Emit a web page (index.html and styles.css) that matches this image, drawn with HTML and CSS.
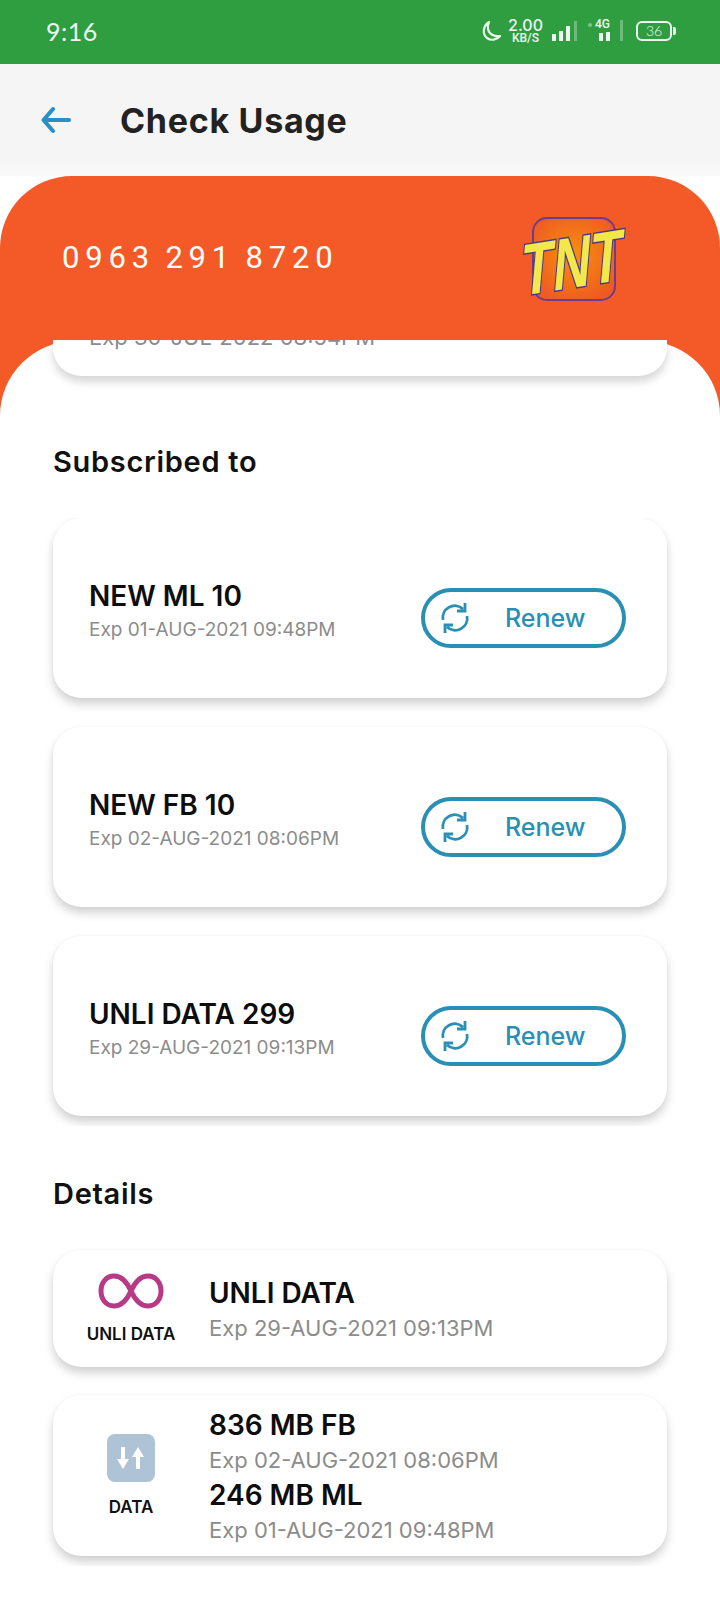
FILE: index.html
```html
<!DOCTYPE html>
<html lang="en">
<head>
  <meta charset="UTF-8" />
  <meta name="viewport" content="width=device-width, initial-scale=1.0"/>
  <title>Check Usage</title>
  <link rel="stylesheet" href="styles.css">
</head>
<body>
  <!-- Status bar -->
  <div class="statusbar">
    <span class="time">9:16</span>
    <div class="status-icons">
      <svg class="moon" width="22" height="24" viewBox="0 0 22 24"><path d="M9 3 C3 7 2 15 7 19 C11 22 17 21 20 17 C14 18 9 15 8 10 C7.600 7.500 8 5 9 3 Z" fill="none" stroke="#e8f5ea" stroke-width="2.200" stroke-linejoin="round"/></svg>
      <div class="speed"><span>2.00</span><span class="unit">KB/S</span></div>
      <svg class="signal" width="26" height="22" viewBox="0 0 26 22">
        <rect x="0" y="14" width="4" height="7" fill="#eef8f0"/>
        <rect x="7" y="11" width="4" height="10" fill="#eef8f0"/>
        <rect x="14" y="6" width="4" height="15" fill="#eef8f0"/>
        <rect x="22" y="1" width="3" height="20" fill="#6dbb7b"/>
      </svg>
      <div class="net">
        <span class="net-label">4G</span>
        <svg width="36" height="24" viewBox="0 0 36 24">
          <circle cx="2" cy="6" r="2" fill="#7fc48b"/>
          <rect x="11" y="14" width="4" height="8" fill="#eef8f0"/>
          <rect x="18" y="13" width="4" height="9" fill="#eef8f0"/>
          <rect x="32" y="1" width="3" height="21" fill="#6dbb7b"/>
        </svg>
      </div>
      <div class="battery"><span class="battery-level">36</span></div>
    </div>
  </div>

  <!-- Header -->
  <div class="header">
    <svg class="back" width="30" height="28" viewBox="0 0 30 28"><path d="M12 3 L2.500 14 L12 25 M3 14 H28" fill="none" stroke="#2a8fc4" stroke-width="4" stroke-linecap="round" stroke-linejoin="round"/></svg>
    <h1>Check Usage</h1>
  </div>

  <!-- Number + logo -->
  <div class="hero">
    <span class="msisdn">0963 291 8720</span>
    <svg class="logo" width="108" height="90" viewBox="0 0 108 90">
      <defs>
        <radialGradient id="logo-glow" cx="50%" cy="45%" r="60%">
          <stop offset="0%" stop-color="#f7900f"/>
          <stop offset="100%" stop-color="#ef5a22"/>
        </radialGradient>
      </defs>
      <rect x="9" y="2" width="82" height="82" rx="14" fill="url(#logo-glow)" stroke="#6b3d8c" stroke-width="2"/>
      <text class="logo-text" x="0" y="0" textLength="102" lengthAdjust="spacingAndGlyphs" transform="translate(-4 80) rotate(-9) skewX(-14) scale(1 2)">TNT</text>
    </svg>
  </div>

  <div class="content">
    <div class="peek-card">
      <span class="exp wide">Exp 30-JUL-2022 08:54PM</span>
    </div>

    <h2 class="section-title first">Subscribed to</h2>

    <div class="subs">
      <div class="sub-card">
        <div class="sub-info">
          <span class="name">NEW ML 10</span>
          <span class="exp">Exp 01-AUG-2021 09:48PM</span>
        </div>
        <a class="renew">
          <svg width="32" height="32" viewBox="0 0 32 32"><path d="M4 18 A12 12 0 0 1 24 7 M28 14 A12 12 0 0 1 8 25 M26 1 V9 H18 M6 31 V23 H14" fill="none" stroke="#2a8fb5" stroke-width="2.800"/></svg>
          <span>Renew</span>
        </a>
      </div>
      <div class="sub-card">
        <div class="sub-info">
          <span class="name">NEW FB 10</span>
          <span class="exp">Exp 02-AUG-2021 08:06PM</span>
        </div>
        <a class="renew">
          <svg width="32" height="32" viewBox="0 0 32 32"><path d="M4 18 A12 12 0 0 1 24 7 M28 14 A12 12 0 0 1 8 25 M26 1 V9 H18 M6 31 V23 H14" fill="none" stroke="#2a8fb5" stroke-width="2.800"/></svg>
          <span>Renew</span>
        </a>
      </div>
      <div class="sub-card">
        <div class="sub-info">
          <span class="name">UNLI DATA 299</span>
          <span class="exp">Exp 29-AUG-2021 09:13PM</span>
        </div>
        <a class="renew">
          <svg width="32" height="32" viewBox="0 0 32 32"><path d="M4 18 A12 12 0 0 1 24 7 M28 14 A12 12 0 0 1 8 25 M26 1 V9 H18 M6 31 V23 H14" fill="none" stroke="#2a8fb5" stroke-width="2.800"/></svg>
          <span>Renew</span>
        </a>
      </div>
    </div>

    <h2 class="section-title">Details</h2>

    <div class="detail-card">
      <div class="detail-icon">
        <svg width="66" height="36" viewBox="0 0 66 36"><path d="M33 18 C28 7 22 3 16 3 C8 3 3 10 3 18 C3 26 8 33 16 33 C22 33 28 29 33 18 C38 7 44 3 50 3 C58 3 63 10 63 18 C63 26 58 33 50 33 C44 33 38 29 33 18 Z" fill="none" stroke="#b83a86" stroke-width="5"/></svg>
        <span>UNLI DATA</span>
      </div>
      <div class="detail-info">
        <span class="name">UNLI DATA</span>
        <span class="exp wide">Exp 29-AUG-2021 09:13PM</span>
      </div>
    </div>

    <div class="detail-card tall">
      <div class="detail-icon">
        <div class="data-badge">
          <svg width="30" height="24" viewBox="0 0 30 24"><path d="M5 1 H9 V13 H13 L7 23 L1 13 H5 Z M20 23 H24 V11 H28 L22 1 L16 11 H20 Z" fill="#fff"/></svg>
        </div>
        <span>DATA</span>
      </div>
      <div class="detail-info">
        <span class="name">836 MB FB</span>
        <span class="exp wide">Exp 02-AUG-2021 08:06PM</span>
        <span class="name">246 MB ML</span>
        <span class="exp wide">Exp 01-AUG-2021 09:48PM</span>
      </div>
    </div>
  </div>
</body>
</html>
```

FILE: styles.css
```css
* {
  margin: 0;
  padding: 0;
  box-sizing: border-box;
  font-family: 'Inter', 'Noto Sans', sans-serif;
}

body {
  width: 720px;
  height: 1600px;
  background-color: #fff;
  overflow: hidden;
}

/* Status bar */
.statusbar {
  height: 64px;
  background-color: #2f9e41;
  color: #eef8f0;
  display: flex;
  justify-content: space-between;
  align-items: center;
  padding: 0 48px 2px 46px;
}

.time {
  font-family: 'Lato', sans-serif;
  font-size: 25px;
  font-weight: 400;
  letter-spacing: 0.5px;
}

.status-icons {
  display: flex;
  align-items: center;
  gap: 10px;
}

.moon {
  margin-right: -2px;
}

.speed {
  display: flex;
  flex-direction: column;
  align-items: center;
  width: 31px;
  font-family: 'Roboto', sans-serif;
  font-size: 16px;
  font-weight: 500;
  line-height: 15px;
}

.speed .unit {
  font-family: 'Roboto', sans-serif;
  font-size: 12px;
  line-height: 11px;
}

.signal {
  margin-left: 1px;
}

.net {
  position: relative;
  width: 36px;
  height: 24px;
}

.net-label {
  position: absolute;
  left: 7px;
  top: -2px;
  font-family: 'Roboto', sans-serif;
  font-size: 12px;
  font-weight: 500;
}

.battery {
  position: relative;
  width: 36px;
  height: 20px;
  margin-left: 2px;
  border: 2px solid #eef8f0;
  border-radius: 6px;
  display: flex;
  justify-content: center;
  align-items: center;
}

.battery::after {
  content: "";
  position: absolute;
  right: -6px;
  top: 4px;
  width: 3px;
  height: 8px;
  background-color: #eef8f0;
  border-radius: 0 2px 2px 0;
}

.battery-level {
  font-family: 'Lato', sans-serif;
  font-size: 14px;
  font-weight: 300;
  line-height: 1;
}

/* Header */
.header {
  height: 112px;
  background: linear-gradient(#f5f5f5 85%, #fafafa);
  display: flex;
  align-items: center;
  padding-left: 41px;
}

.back {
  margin-right: 49px;
}

h1 {
  font-size: 34px;
  font-weight: 700;
  color: #222;
  letter-spacing: 0.7px;
}

/* Orange card */
.hero {
  position: relative;
  height: 244px;
  background-color: #f45a28;
  border-radius: 72px 72px 0 0;
  padding: 62px 88px 0 62px;
  display: flex;
  justify-content: space-between;
  align-items: flex-start;
}

.hero::after {
  content: "";
  position: absolute;
  left: 0;
  right: 0;
  bottom: 0;
  height: 79px;
  background-color: #fff;
  border-radius: 75px 75px 0 0;
}

.msisdn {
  color: #fff;
  font-family: 'Roboto', sans-serif;
  font-size: 31px;
  font-weight: 400;
  letter-spacing: 5.8px;
  word-spacing: -3px;
  margin-top: 1px;
}

.logo {
  margin-top: -22px;
  overflow: visible;
}

.logo-text {
  font-family: 'Liberation Sans', sans-serif;
  font-size: 36px;
  font-weight: 700;
  fill: #f3e84b;
  stroke: #4b3a80;
  stroke-width: 1.500;
  paint-order: stroke;
}

/* Scrolling area */
.content {
  position: relative;
  z-index: 1;
  height: 1226px;
  margin-top: -80px;
  padding: 0 53px;
  overflow: hidden;
}

.peek-card {
  height: 36px;
  background-color: #fff;
  border-radius: 0 0 28px 28px;
  box-shadow: 0 6px 8px rgba(0, 0, 0, 0.16);
  padding-left: 36px;
  overflow: hidden;
}

.peek-card .exp {
  display: block;
  margin-top: -21px;
}

.section-title {
  font-size: 29px;
  font-weight: 600;
  color: #111;
  letter-spacing: 0.7px;
  line-height: 40px;
  margin-top: 48px;
  margin-bottom: 36px;
}

.section-title.first {
  margin-top: 66px;
}

.subs {
  display: flex;
  flex-direction: column;
  gap: 29px;
  margin: 0 -53px;
  padding: 0 53px 10px;
  overflow: hidden;
}

.sub-card {
  height: 180px;
  background-color: #fff;
  border-radius: 28px;
  box-shadow: 0 6px 10px rgba(0, 0, 0, 0.18), 0 0 3px rgba(0, 0, 0, 0.04);
  display: flex;
  justify-content: space-between;
  align-items: center;
  padding: 20px 41px 0 36px;
}

.sub-info {
  display: flex;
  flex-direction: column;
  margin-top: -12px;
}

.detail-info {
  display: flex;
  flex-direction: column;
  padding-top: 4px;
}

.name {
  font-size: 28px;
  font-weight: 600;
  color: #0d0d0d;
  line-height: 34px;
}

.exp {
  font-size: 19px;
  font-weight: 400;
  color: #8c8c8c;
  line-height: 33px;
}

.exp.wide {
  font-size: 22px;
  line-height: 36px;
}

.renew {
  width: 205px;
  height: 60px;
  border: 4px solid #2a8fb5;
  border-radius: 30px;
  display: flex;
  align-items: center;
  padding-left: 14px;
  color: #2a8fb5;
  font-size: 25px;
  font-weight: 500;
  gap: 34px;
}

.detail-card {
  height: 117px;
  background-color: #fff;
  border-radius: 28px;
  box-shadow: 0 6px 10px rgba(0, 0, 0, 0.18), 0 0 3px rgba(0, 0, 0, 0.04);
  display: flex;
  align-items: center;
  margin-bottom: 28px;
}

.detail-card.tall {
  height: 161px;
}

.detail-icon {
  width: 156px;
  display: flex;
  flex-direction: column;
  align-items: center;
  gap: 15px;
  flex-shrink: 0;
}

.detail-icon span {
  font-size: 17px;
  font-weight: 600;
  color: #111;
}

.data-badge {
  width: 48px;
  height: 48px;
  border-radius: 8px;
  background-color: #aec4d6;
  display: flex;
  justify-content: center;
  align-items: center;
}
```
